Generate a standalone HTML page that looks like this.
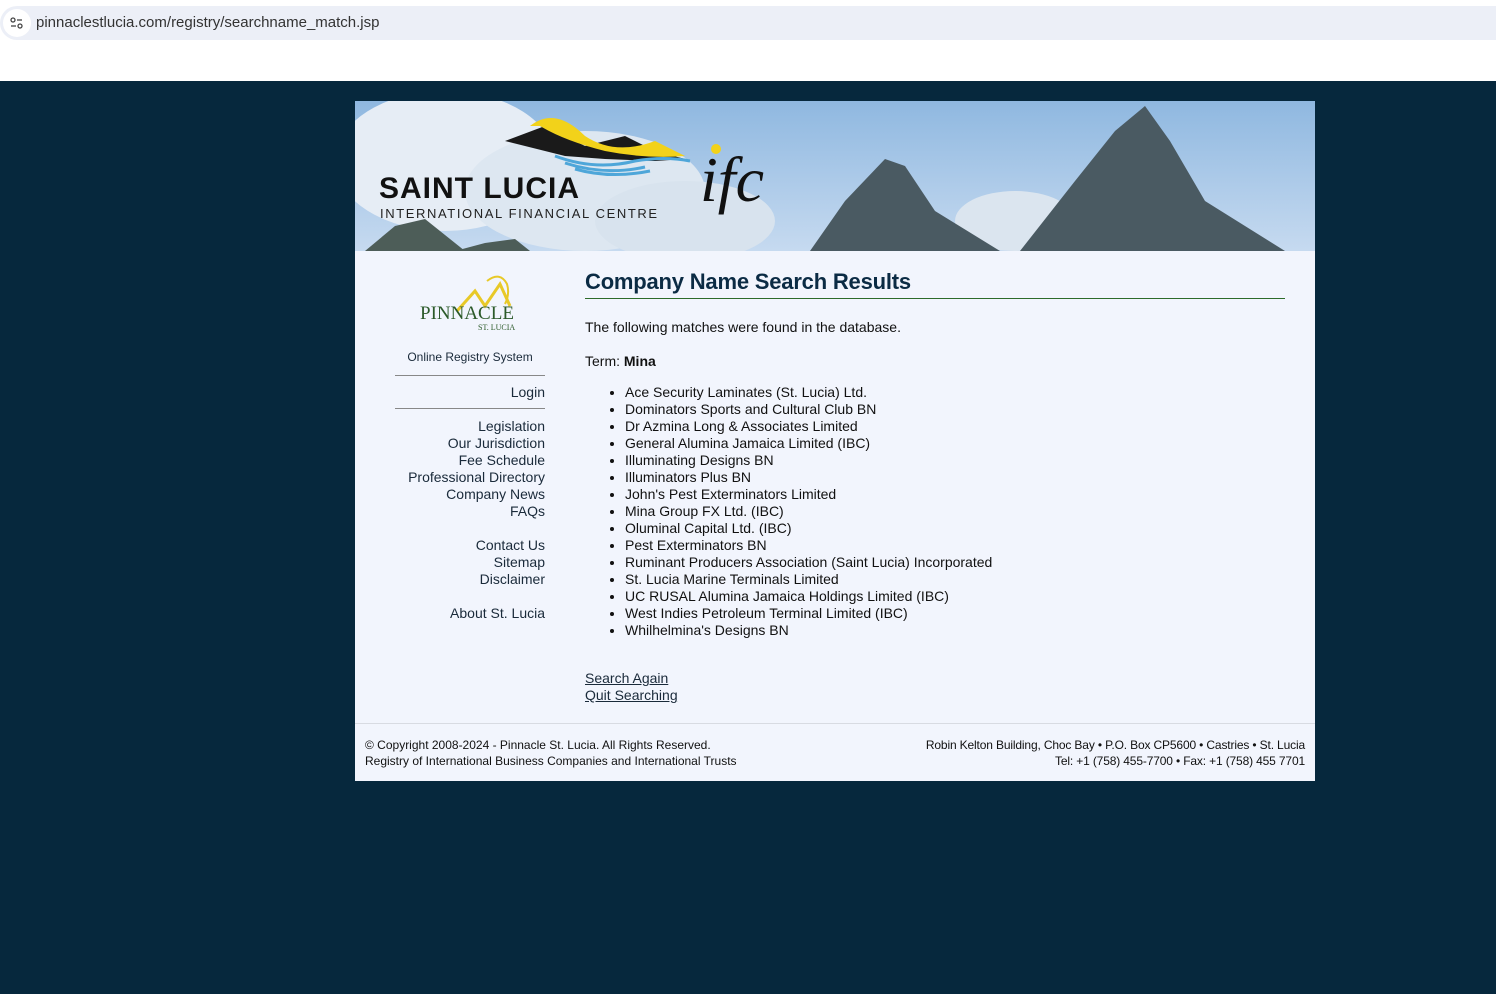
<!DOCTYPE html>
<html><head><meta charset="utf-8"><style>
*{margin:0;padding:0;box-sizing:border-box}
body{width:1496px;height:994px;background:#06283d;font-family:"Liberation Sans","DejaVu Sans",sans-serif;overflow:hidden;position:relative}
.top{position:absolute;left:0;top:0;width:1496px;height:81px;background:#fff}
.bar{position:absolute;left:0;top:6px;width:1496px;height:34px;background:#eceff7;border-radius:17px 0 0 17px}
.bar .ic{position:absolute;left:3px;top:3px;width:28px;height:28px;border-radius:14px;background:#fff}
.bar .url{position:absolute;left:36px;top:8px;font-size:15px;color:#333}
.wrap{position:absolute;left:355px;top:101px;width:960px;height:680px;background:#f2f5fd}
.banner{position:absolute;left:0;top:0;width:960px;height:150px}
.side{position:absolute;left:40px;top:150px;width:150px;text-align:right;font-size:14px;color:#1a2a3a;line-height:17px}
.side a{color:#1a2a3a;text-decoration:none;display:block}
.hr{border-top:1px solid #888;margin:0}
.main{position:absolute;left:230px;top:150px;width:700px;font-size:14px;color:#111}
h1{font-size:22px;color:#0b2b44;margin-top:18px;padding-bottom:3px;border-bottom:1px solid #2d6b2a;font-weight:bold;letter-spacing:-0.2px}
ul{margin:15px 0 0 40px;line-height:17px}
.foot{position:absolute;left:0;top:622px;width:960px;height:58px;border-top:1px solid #d8dbe2;font-size:12px;color:#111;line-height:16px}
</style></head><body>
<div class="top"><div class="bar"><div class="ic"><svg width="28" height="28"><circle cx="10" cy="11" r="2" fill="none" stroke="#444" stroke-width="1.3"/><line x1="14" y1="11" x2="19" y2="11" stroke="#444" stroke-width="1.3"/><line x1="8" y1="17" x2="13" y2="17" stroke="#444" stroke-width="1.3"/><circle cx="17" cy="17" r="2" fill="none" stroke="#444" stroke-width="1.3"/></svg></div><div class="url">pinnaclestlucia.com/registry/searchname_match.jsp</div></div></div>
<div class="wrap">
<svg class="banner" width="960" height="150">
<defs><linearGradient id="sky" x1="0" y1="0" x2="0" y2="1"><stop offset="0" stop-color="#8fb8e0"/><stop offset="1" stop-color="#c6daf0"/></linearGradient></defs>
<rect width="960" height="150" fill="url(#sky)"/>
<ellipse cx="90" cy="60" rx="110" ry="70" fill="#e6edf5"/>
<ellipse cx="230" cy="90" rx="120" ry="60" fill="#dde7f1"/>
<ellipse cx="330" cy="120" rx="90" ry="40" fill="#d8e3ee"/>
<ellipse cx="660" cy="120" rx="60" ry="30" fill="#dbe5ef"/>
<polygon points="10,150 40,125 70,118 110,150" fill="#4d5d58"/>
<polygon points="100,150 130,142 160,138 175,150" fill="#4d5d58"/>
<polygon points="455,150 490,100 530,58 550,65 580,110 645,150" fill="#4a5a62"/>
<polygon points="665,150 720,80 760,30 790,5 815,40 850,100 930,150" fill="#4a5a62"/>
<g>
<polygon points="150,40 190,25 230,45 270,35 300,50 330,58 300,60 250,58 210,55" fill="#1a1a1a"/>
<path d="M175 25 Q200 5 230 35 Q260 55 300 40 L330 55 Q290 58 250 50 Q210 40 185 25Z" fill="#f2d21a"/>
<path d="M200 55 Q240 70 280 60 Q310 55 335 60 M210 62 Q250 75 290 66 M220 68 Q255 78 295 70" stroke="#4ea6d9" stroke-width="3" fill="none"/>
</g>
<text x="24" y="97" font-size="30" font-weight="bold" fill="#111" font-family="Liberation Sans,sans-serif" letter-spacing="1">SAINT LUCIA</text>
<text x="25" y="117" font-size="13" fill="#222" font-family="Liberation Sans,sans-serif" letter-spacing="1.6">INTERNATIONAL FINANCIAL CENTRE</text>
<text x="345" y="100" font-size="64" font-style="italic" fill="#111" font-family="Liberation Serif,serif">ifc</text>
<circle cx="361" cy="48" r="5" fill="#f2d21a"/>
</svg>
<div class="side">
<svg width="150" height="70" style="display:block;margin-top:15px"><path d="M62 45 L80 25 L90 40 L105 18 L115 40" stroke="#e8c928" stroke-width="3" fill="none"/><path d="M92 15 Q105 5 112 18 Q115 28 110 38" stroke="#e8c928" stroke-width="2" fill="none"/><text x="25" y="53" font-size="19" fill="#2c5a2a" font-family="Liberation Serif,serif">PINNACLE</text><text x="83" y="64" font-size="8" fill="#2c5a2a" font-family="Liberation Serif,serif">ST. LUCIA</text></svg>
<div style="text-align:center;font-size:12px;margin-top:13px;margin-bottom:9px">Online Registry System</div>
<div class="hr"></div>
<a style="margin:8px 0 7px">Login</a>
<div class="hr"></div>
<div style="margin-top:9px"><a>Legislation</a><a>Our Jurisdiction</a><a>Fee Schedule</a><a>Professional Directory</a><a>Company News</a><a>FAQs</a></div>
<div style="margin-top:17px"><a>Contact Us</a><a>Sitemap</a><a>Disclaimer</a></div>
<div style="margin-top:17px"><a>About St. Lucia</a></div>
</div>
<div class="main">
<h1>Company Name Search Results</h1>
<p style="margin-top:20px">The following matches were found in the database.</p>
<p style="margin-top:18px">Term: <b>Mina</b></p>
<ul>
<li>Ace Security Laminates (St. Lucia) Ltd.</li>
<li>Dominators Sports and Cultural Club BN</li>
<li>Dr Azmina Long &amp; Associates Limited</li>
<li>General Alumina Jamaica Limited (IBC)</li>
<li>Illuminating Designs BN</li>
<li>Illuminators Plus BN</li>
<li>John's Pest Exterminators Limited</li>
<li>Mina Group FX Ltd. (IBC)</li>
<li>Oluminal Capital Ltd. (IBC)</li>
<li>Pest Exterminators BN</li>
<li>Ruminant Producers Association (Saint Lucia) Incorporated</li>
<li>St. Lucia Marine Terminals Limited</li>
<li>UC RUSAL Alumina Jamaica Holdings Limited (IBC)</li>
<li>West Indies Petroleum Terminal Limited (IBC)</li>
<li>Whilhelmina's Designs BN</li>
</ul>
<p style="margin-top:31px;line-height:17px"><a style="color:#1a2a3a;text-decoration:underline">Search Again</a><br><a style="color:#1a2a3a;text-decoration:underline">Quit Searching</a></p>
</div>
<div class="foot">
<div style="position:absolute;left:10px;top:13px">© Copyright 2008-2024 - Pinnacle St. Lucia. All Rights Reserved.<br>Registry of International Business Companies and International Trusts</div>
<div style="position:absolute;right:10px;top:13px;text-align:right;letter-spacing:-0.15px">Robin Kelton Building, Choc Bay • P.O. Box CP5600 • Castries • St. Lucia<br>Tel: +1 (758) 455-7700 • Fax: +1 (758) 455 7701</div>
</div>
</div>
</body></html>
